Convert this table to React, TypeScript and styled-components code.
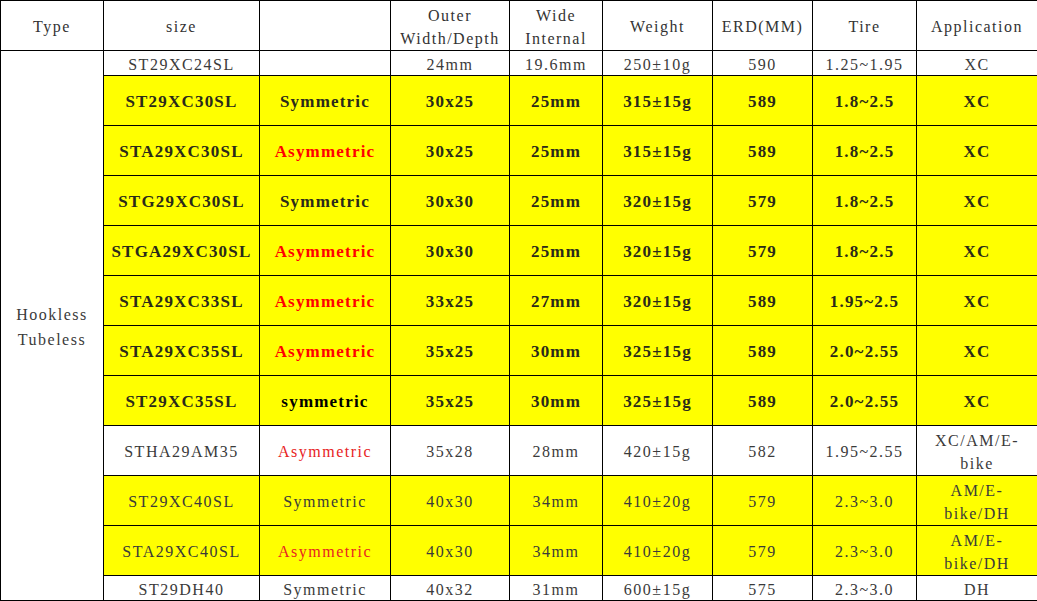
import styled, { createGlobalStyle } from 'styled-components'

const GlobalStyle = createGlobalStyle`
  html, body {
    margin: 0;
    padding: 0;
    background: #fff;
  }
`

type Variant = 'plain' | 'bold' | 'soft'

type Spec = {
  size: string
  shape: string
  shapeTone?: 'red' | 'black'
  outer: string
  wide: string
  weight: string
  erd: string
  tire: string
  app: string
  variant: Variant
  thin?: boolean
}

const specs: Spec[] = [
  { size: 'ST29XC24SL', shape: '', outer: '24mm', wide: '19.6mm', weight: '250±10g', erd: '590', tire: '1.25~1.95', app: 'XC', variant: 'plain', thin: true },
  { size: 'ST29XC30SL', shape: 'Symmetric', outer: '30x25', wide: '25mm', weight: '315±15g', erd: '589', tire: '1.8~2.5', app: 'XC', variant: 'bold' },
  { size: 'STA29XC30SL', shape: 'Asymmetric', shapeTone: 'red', outer: '30x25', wide: '25mm', weight: '315±15g', erd: '589', tire: '1.8~2.5', app: 'XC', variant: 'bold' },
  { size: 'STG29XC30SL', shape: 'Symmetric', outer: '30x30', wide: '25mm', weight: '320±15g', erd: '579', tire: '1.8~2.5', app: 'XC', variant: 'bold' },
  { size: 'STGA29XC30SL', shape: 'Asymmetric', shapeTone: 'red', outer: '30x30', wide: '25mm', weight: '320±15g', erd: '579', tire: '1.8~2.5', app: 'XC', variant: 'bold' },
  { size: 'STA29XC33SL', shape: 'Asymmetric', shapeTone: 'red', outer: '33x25', wide: '27mm', weight: '320±15g', erd: '589', tire: '1.95~2.5', app: 'XC', variant: 'bold' },
  { size: 'STA29XC35SL', shape: 'Asymmetric', shapeTone: 'red', outer: '35x25', wide: '30mm', weight: '325±15g', erd: '589', tire: '2.0~2.55', app: 'XC', variant: 'bold' },
  { size: 'ST29XC35SL', shape: 'symmetric', shapeTone: 'black', outer: '35x25', wide: '30mm', weight: '325±15g', erd: '589', tire: '2.0~2.55', app: 'XC', variant: 'bold' },
  { size: 'STHA29AM35', shape: 'Asymmetric', shapeTone: 'red', outer: '35x28', wide: '28mm', weight: '420±15g', erd: '582', tire: '1.95~2.55', app: 'XC/AM/E-bike', variant: 'plain' },
  { size: 'ST29XC40SL', shape: 'Symmetric', outer: '40x30', wide: '34mm', weight: '410±20g', erd: '579', tire: '2.3~3.0', app: 'AM/E-bike/DH', variant: 'soft' },
  { size: 'STA29XC40SL', shape: 'Asymmetric', shapeTone: 'red', outer: '40x30', wide: '34mm', weight: '410±20g', erd: '579', tire: '2.3~3.0', app: 'AM/E-bike/DH', variant: 'soft' },
  { size: 'ST29DH40', shape: 'Symmetric', outer: '40x32', wide: '31mm', weight: '600±15g', erd: '575', tire: '2.3~3.0', app: 'DH', variant: 'plain', thin: true },
]

const columnWidths = [103, 156, 131, 119, 93, 110, 100, 104, 121]

const Sheet = styled.table`
  width: 1037px;
  table-layout: fixed;
  border-collapse: collapse;
  font-family: 'Liberation Serif', 'Noto Sans CJK SC', serif;
  font-size: 16px;
  letter-spacing: 1.5px;
  color: #333;
`

const Row = styled.tr<{ $height: number }>`
  height: ${({ $height }) => $height}px;
`

const HeadCell = styled.th`
  border: 1px solid #000;
  padding: 2px 3px 0;
  font-weight: normal;
  line-height: 23px;
  text-align: center;
  vertical-align: middle;
  background: #fff;
`

const Cell = styled.td<{ $variant: Variant; $thin?: boolean }>`
  border: 1px solid #000;
  padding: 2px 4px 0;
  text-align: center;
  vertical-align: middle;
  line-height: ${({ $thin }) => ($thin ? '21px' : '23px')};
  background: ${({ $variant }) => ($variant === 'plain' ? '#fff' : '#ffff00')};
  font-size: ${({ $variant }) => ($variant === 'bold' ? '17px' : '16px')};
  font-weight: ${({ $variant }) => ($variant === 'bold' ? 'bold' : 'normal')};
  letter-spacing: ${({ $variant }) => ($variant === 'bold' ? '1.2px' : '1.5px')};
  color: ${({ $variant }) => ($variant === 'bold' ? '#2a2a1a' : '#3a3a3a')};
`

const TypeCell = styled.td`
  border: 1px solid #000;
  padding: 2px 4px 0;
  text-align: center;
  vertical-align: middle;
  line-height: 25px;
  background: #fff;
  color: #3a3a3a;
`

const Shape = styled.span<{ $tone?: 'red' | 'black'; $bold: boolean }>`
  color: ${({ $tone, $bold }) =>
    $tone === 'red' ? ($bold ? '#ff0000' : '#e82323') : $tone === 'black' ? '#000' : 'inherit'};
`

const headers = ['Type', 'size', '', 'Outer Width/Depth', 'Wide Internal', 'Weight', 'ERD(MM)', 'Tire', 'Application']

export default function App() {
  return (
    <>
      <GlobalStyle />
      <Sheet>
        <colgroup>
          {columnWidths.map((w, i) => (
            <col key={i} style={{ width: w }} />
          ))}
        </colgroup>
        <thead>
          <Row $height={50}>
            {headers.map((h, i) => (
              <HeadCell key={i}>{h}</HeadCell>
            ))}
          </Row>
        </thead>
        <tbody>
          {specs.map((s, i) => {
            const cells = [s.size, null, s.outer, s.wide, s.weight, s.erd, s.tire, s.app]
            return (
              <Row key={s.size} $height={s.thin ? 25 : 50}>
                {i === 0 && (
                  <TypeCell rowSpan={specs.length}>Hookless Tubeless</TypeCell>
                )}
                {cells.map((value, j) => (
                  <Cell key={j} $variant={s.variant} $thin={s.thin}>
                    {value ?? (
                      <Shape $tone={s.shapeTone} $bold={s.variant === 'bold'}>
                        {s.shape}
                      </Shape>
                    )}
                  </Cell>
                ))}
              </Row>
            )
          })}
        </tbody>
      </Sheet>
    </>
  )
}
